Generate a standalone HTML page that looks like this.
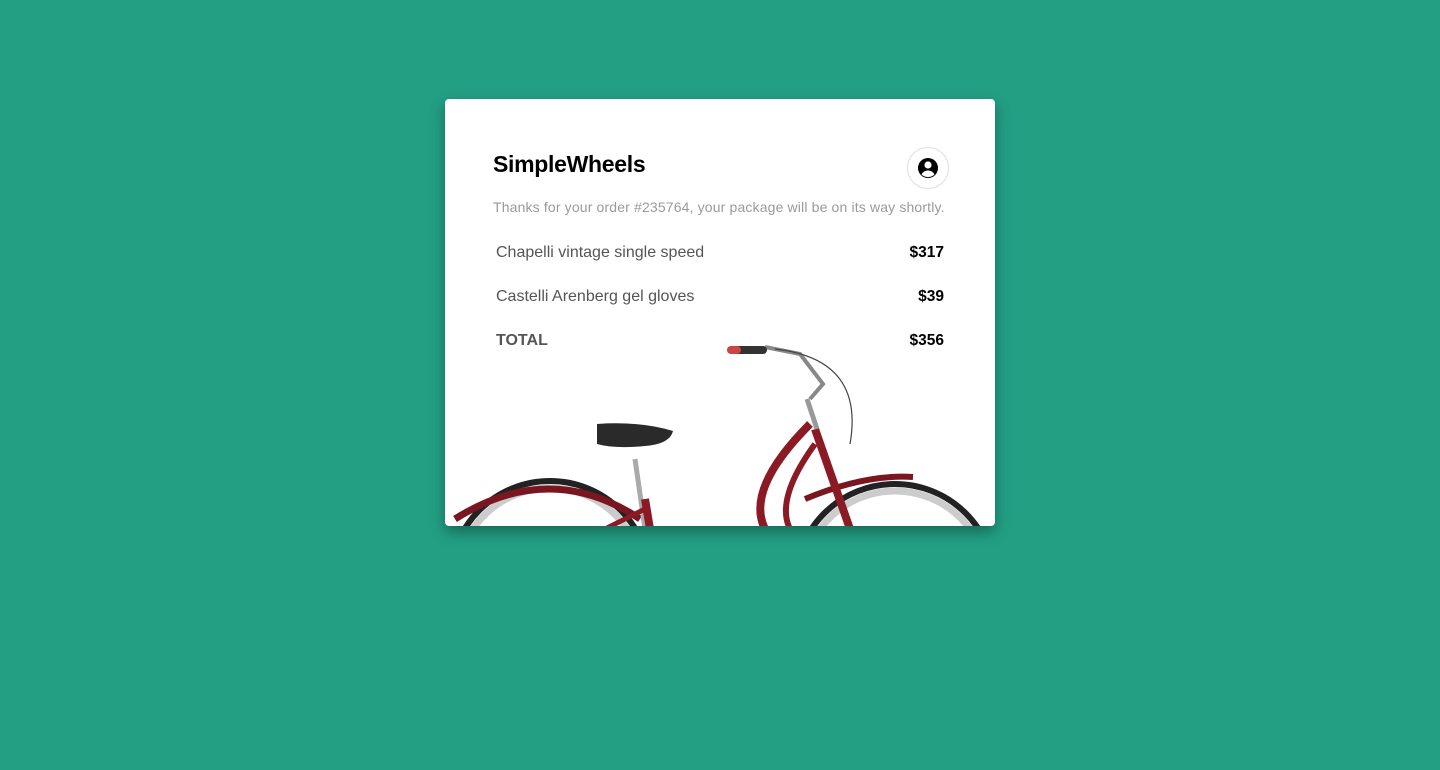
<!DOCTYPE html>
<html><head><meta charset="utf-8"><style>
html,body{margin:0;height:100%;background:#239f84;font-family:"Liberation Sans",sans-serif}
.card{position:absolute;left:445px;top:99px;width:550px;height:427px;background:#fff;border-radius:4px;box-shadow:0 6px 14px rgba(0,0,0,.35);overflow:hidden}
h1{position:absolute;left:48px;top:52px;margin:0;font-size:23px;font-weight:bold;color:#000;letter-spacing:-0.3px}
.av{position:absolute;left:462px;top:48px;width:42px;height:42px;border:1px solid #ddd;border-radius:50%;box-sizing:border-box}
.sub{position:absolute;left:48px;top:100px;font-size:14px;color:#9a9a9a;letter-spacing:0.15px}
.row{position:absolute;left:51px;width:448px;font-size:16px;color:#555;display:flex;justify-content:space-between}
.row b{color:#000;font-weight:bold;font-size:15.5px}
</style></head><body>
<div class="card">
<h1>SimpleWheels</h1>
<div class="av"><svg width="40" height="40" viewBox="0 0 40 40"><circle cx="20" cy="20" r="10" fill="#000"/><circle cx="20" cy="17" r="3.6" fill="#fff"/><path d="M13.5 26.5c1.5-3 4-4 6.5-4s5 1 6.5 4c-1.8 1.7-4 2.5-6.5 2.5s-4.700-.8-6.500-2.500z" fill="#fff"/></svg></div>
<div class="sub">Thanks for your order #235764, your package will be on its way shortly.</div>
<div class="row" style="top:145px"><span>Chapelli vintage single speed</span><b>$317</b></div>
<div class="row" style="top:189px"><span>Castelli Arenberg gel gloves</span><b>$39</b></div>
<div class="row" style="top:233px"><span style="font-weight:bold">TOTAL</span><b>$356</b></div>
<svg style="position:absolute;left:0;top:0" width="550" height="427" viewBox="0 0 550 427">
<g fill="none">
<circle cx="105" cy="482" r="100" stroke="#222" stroke-width="6"/>
<circle cx="105" cy="482" r="93" stroke="#ccc" stroke-width="7"/>
<circle cx="450" cy="485" r="100" stroke="#222" stroke-width="6"/>
<circle cx="450" cy="485" r="93" stroke="#ccc" stroke-width="7"/>
<path d="M10 420 Q105 360 195 420" stroke="#7a1620" stroke-width="7"/>
<path d="M360 400 Q420 375 468 378" stroke="#7a1620" stroke-width="6"/>
<path d="M190 360 L200 430" stroke="#aaa" stroke-width="5"/>
<path d="M200 400 L205 430" stroke="#8b1a24" stroke-width="8"/>
<path d="M370 330 L405 430" stroke="#8b1a24" stroke-width="8"/>
<path d="M365 325 Q300 390 320 430" stroke="#8b1a24" stroke-width="8"/>
<path d="M370 345 Q330 400 345 430" stroke="#8b1a24" stroke-width="6"/>
<path d="M160 430 L200 410" stroke="#8b1a24" stroke-width="5"/>
<path d="M362 300 L372 330" stroke="#999" stroke-width="5"/>
<path d="M365 300 L378 285 L355 255 L320 248" stroke="#888" stroke-width="4"/>
<path d="M330 250 Q420 260 405 345" stroke="#444" stroke-width="1.2"/>
<path d="M288 251 L318 251" stroke="#333" stroke-width="8" stroke-linecap="round"/>
<path d="M286 251 L292 251" stroke="#c44" stroke-width="8" stroke-linecap="round"/>
</g>
<path d="M152 325 Q195 322 228 332 Q225 345 200 347 Q170 350 152 345 Z" fill="#2a2a2a"/>
</svg>
</div>
</body></html>
